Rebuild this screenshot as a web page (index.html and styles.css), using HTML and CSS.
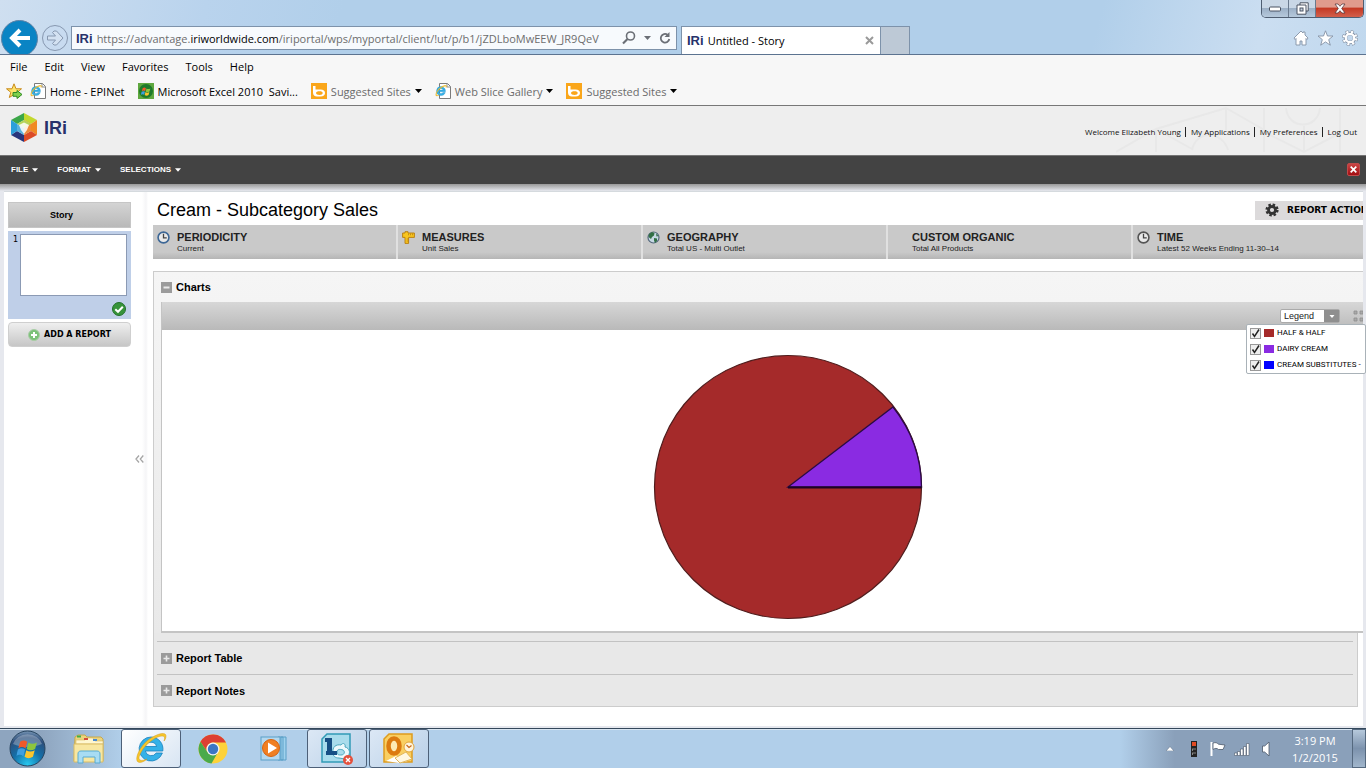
FILE: index.html
```html
<!DOCTYPE html>
<html lang="en">
<head>
<meta charset="utf-8">
<title>Untitled - Story</title>
<link rel="stylesheet" href="styles.css">
</head>
<body>
<svg class="defs" aria-hidden="true">
  <defs>
    <symbol id="ie" viewBox="0 0 32 32">
      <path d="M16 4a12 12 0 1 0 11.400 16h-6.200a6 6 0 0 1-10.900-2h17.500A12 12 0 0 0 16 4zm-5.600 9.500a5.800 5.800 0 0 1 11.200 0z" fill="#35b1e8" stroke="#1680bd" stroke-width=".8"/>
      <path d="M3 29C-1 26 5 12 16 5 24 0 31-1 31 3c0 2-1 4-2 5 1-3 1-5-2-5-5 0-14 6-19 13-4 6-5 10-3 11 2 1 5 0 7-1-3 3-7 4-9 3z" fill="#f6c62c" stroke="#d69a12" stroke-width=".5"/>
    </symbol>
    <symbol id="iepage" viewBox="0 0 16 16">
      <path d="M4.500.500h8l3 3v12h-11z" fill="#fff" stroke="#7b7b7b"/>
      <path d="M12 .5v3.500h3.500" fill="none" stroke="#8b8b8b"/>
      <use href="#ie" x="0" y="2" width="12" height="12"/>
    </symbol>
    <symbol id="bing" viewBox="0 0 16 16">
      <rect width="16" height="16" fill="#faa61a"/>
      <path fill-rule="evenodd" d="M2 3h2.500v3.500h5c3 0 4.500 1.500 4.500 3.500s-1.500 3.500-4.500 3.500H6c-2.500 0-4-1.500-4-4zm6.500 5.200c-2 0-3.500.6-3.500 1.800S6.500 12 8.500 12s3.200-.8 3.200-2-1.200-1.800-3.200-1.800z" fill="#fff"/>
    </symbol>
    <symbol id="down" viewBox="0 0 7 4"><path d="M0 0h7L3.500 4z" fill="currentColor"/></symbol>
    <symbol id="flag" viewBox="0 0 20 20">
      <path d="M3 4c2-1.500 4-1.500 6 0L7.500 9.500c-2-1.500-4-1.500-6 0z" fill="#f0592a"/>
      <path d="M10 4.500c2 1.500 4.500 1.500 7 0L15.500 10c-2.500 1.500-5 1.500-7 0z" fill="#8cc63e"/>
      <path d="M1.200 10.500c2-1.500 4-1.500 6 0L5.700 16c-2-1.500-4-1.500-6 0z" fill="#3f9fe0"/>
      <path d="M8.200 11c2 1.500 4.500 1.500 7 0l-1.500 5.500c-2.500 1.500-5 1.500-7 0z" fill="#fbc52d"/>
    </symbol>
    <symbol id="clock" viewBox="0 0 12 12">
      <circle cx="6" cy="6" r="5" fill="#e9e9e9" stroke="currentColor" stroke-width="1.500"/>
      <path d="M6 2.500V6.300h3" fill="none" stroke="#444" stroke-width="1.200"/>
    </symbol>
  </defs>
</svg>

<header class="browser">
  <div class="nav">
    <div class="history">
      <button class="back" aria-label="Back"><svg viewBox="0 0 22 20" width="22" height="20"><path d="M11 2L3 10l8 8M3.500 10H21" fill="none" stroke="#fff" stroke-width="4"/></svg></button>
      <button class="forward" aria-label="Forward"><svg viewBox="0 0 18 16" width="18" height="16"><path d="M1.500 6h8L6.500 2.500 8 1h2.500L17 8l-6.500 7H8l-1.500-1.500 3-3.500h-8z" fill="#d3e1f1" stroke="#8798b0"/></svg></button>
    </div>
    <div class="address">
      <span class="iri small">IRi</span>
      <div class="url" role="textbox" contenteditable="true" spellcheck="false" aria-label="Address">https://advantage.<b>iriworldwide.com</b>/iriportal/wps/myportal/client/!ut/p/b1/jZDLboMwEEW_JR9QeV</div>
      <button class="plain" aria-label="Search"><svg width="14" height="14" viewBox="0 0 14 14"><circle cx="8.500" cy="5" r="4" fill="none" stroke="#6b6f76" stroke-width="1.600"/><path d="M5.500 8L1 12.500" stroke="#6b6f76" stroke-width="2.200"/></svg></button>
      <button class="plain grey" aria-label="Address history"><svg width="7" height="4"><use href="#down"/></svg></button>
      <button class="plain" aria-label="Refresh"><svg width="12" height="14" viewBox="0 0 12 14"><path d="M8.500 3.700A4.300 4.300 0 1 0 10.300 8" fill="none" stroke="#6b6f76" stroke-width="1.800"/><path d="M10.500 1v5h-5z" fill="#6b6f76"/></svg></button>
    </div>
    <div class="tabs">
      <div class="tab"><span class="iri small">IRi</span><span class="tab-name">Untitled - Story</span>
        <button class="plain" aria-label="Close tab"><svg width="9" height="9" viewBox="0 0 9 9"><path d="M1 1l7 7M8 1L1 8" stroke="#9a9a9a" stroke-width="2"/></svg></button></div>
      <button class="newtab" aria-label="New tab"></button>
    </div>
    <div class="window">
      <div class="controls">
        <button aria-label="Minimize"><svg width="13" height="6" viewBox="0 0 13 6"><rect x=".5" y="1" width="11" height="4" rx="1" fill="#fff" stroke="#4a5362"/></svg></button>
        <button aria-label="Restore"><svg width="13" height="13" viewBox="0 0 13 13"><path d="M4 .8h8.200V9H10v3.200H1V3h3z" fill="#fff" stroke="#4a5362"/><rect x="4" y="6" width="3" height="3" fill="#c8d2df" stroke="#4a5362"/><path d="M4 3h6v6" fill="none" stroke="#4a5362"/></svg></button>
        <button class="close" aria-label="Close"><svg width="12" height="11" viewBox="0 0 12 11"><path d="M1 1h3l2 2.300L8 1h3L7.700 5.500 11 10H8L6 7.700 4 10H1l3.300-4.500z" fill="#fff" stroke="#5b3a3f" stroke-width=".8"/></svg></button>
      </div>
      <div class="tools">
        <button class="plain" aria-label="Home"><svg width="16" height="16" viewBox="0 0 16 16"><path d="M8 1L1 8l1 1.500 1-1V15h4v-4h2v4h4V8.500l1 1L15 8l-3-3V2h-2v1z" fill="#fff" stroke="#8592a5" stroke-width=".9"/></svg></button>
        <button class="plain" aria-label="Favorites"><svg width="17" height="16" viewBox="0 0 17 16"><path d="M8.500.8l2 5.200H16l-4.300 3.600 1.600 5.600-4.800-3.300-4.800 3.300 1.600-5.600L1 6h5.500z" fill="#fff" stroke="#8592a5" stroke-width=".9"/></svg></button>
        <button class="plain" aria-label="Settings"><svg width="16" height="16" viewBox="0 0 16 16"><circle cx="8" cy="8" r="6" fill="none" stroke="#8592a5" stroke-width="4" stroke-dasharray="2.700 2.010"/><circle cx="8" cy="8" r="4.500" fill="#c4d9ee" stroke="#8592a5" stroke-width="3.400"/><circle cx="8" cy="8" r="6" fill="none" stroke="#fff" stroke-width="2.800" stroke-dasharray="2 2.710" stroke-dashoffset="-.35"/><circle cx="8" cy="8" r="4.200" fill="none" stroke="#fff" stroke-width="2.200"/></svg></button>
      </div>
    </div>
  </div>
  <nav class="menu" aria-label="Browser menu">
    <button>File</button><button>Edit</button><button>View</button><button>Favorites</button><button>Tools</button><button>Help</button>
  </nav>
  <nav class="bookmarks" aria-label="Favorites bar">
    <button class="plain star" aria-label="Add to Favorites bar"><svg width="17" height="16" viewBox="0 0 17 16"><path d="M8 .8l2 5h5.500l-4.300 3.500 1.500 5.200L8 11.500l-4.700 3 1.500-5.200L.5 5.800H6z" fill="#fde36a" stroke="#c98a1b"/><path d="M7 9.500h4V7.500l5 4-5 4v-2.200H7z" fill="#7fd04c" stroke="#2f8a25"/></svg></button>
    <a href="#" class="dark"><svg width="16" height="16"><use href="#iepage"/></svg>Home - EPINet</a>
    <a href="#" class="dark"><svg width="16" height="16" viewBox="0 0 16 16"><rect width="16" height="16" fill="#5fa83f"/><circle cx="8" cy="8" r="7" fill="#1e7a2a"/><use href="#flag" x="3" y="3" width="11" height="11"/></svg>Microsoft Excel 2010&nbsp; Savi...</a>
    <a href="#"><svg width="16" height="16"><use href="#bing"/></svg>Suggested Sites<svg class="arrow" width="7" height="4"><use href="#down"/></svg></a>
    <a href="#"><svg width="16" height="16"><use href="#iepage"/></svg>Web Slice Gallery<svg class="arrow" width="7" height="4"><use href="#down"/></svg></a>
    <a href="#"><svg width="16" height="16"><use href="#bing"/></svg>Suggested Sites<svg class="arrow" width="7" height="4"><use href="#down"/></svg></a>
  </nav>
</header>

<header class="portal">
  <svg class="pattern" width="240" height="48" viewBox="0 0 240 48" fill="none" stroke="#e8e8e8" stroke-width="2" aria-hidden="true"><path d="M0 46L40 23 110 2l42 24M40 23v23M110 2v22M40 23l36 20M76 44c4-20 30-20 36 0M148 2v44M148 26l40 20 38-20M188 28v18M170 2c2 22 32 22 34 0M188 20v10M224 2v44"/></svg>
  <div class="brand">
    <svg width="26" height="29" viewBox="0 0 26 29"><path d="M13 0L0 7l6 4 7-4z" fill="#3ba648"/><path d="M13 0l13 7-6 4-7-4z" fill="#c3d82e"/><path d="M26 7v15l-6-4v-7z" fill="#f08a24"/><path d="M26 22l-13 7v-7l7-4z" fill="#dc4b27"/><path d="M13 29L0 22l6-4 7 4z" fill="#28357c"/><path d="M0 22V7l6 4v7z" fill="#2b9fda"/><path d="M13 7l7 4v7l-7 4z" fill="#ee8a3a"/><path d="M6 11l7-4 7 4-7 4z" fill="#b5d45a"/><path d="M6 11l7 4v7l-7-4z" fill="#58b0dd"/><path d="M8 12l5-2.500 5 2.500-2 5-3 4-3-4z" fill="#fff" opacity=".85"/></svg>
    <span class="iri large">IRi</span>
  </div>
  <nav class="account" aria-label="Account">
    <span>Welcome Elizabeth Young</span><a href="#">My Applications</a><a href="#">My Preferences</a><a href="#">Log Out</a>
  </nav>
</header>

<nav class="commands" aria-label="Report menu">
  <button>FILE<svg width="6" height="4"><use href="#down"/></svg></button>
  <button>FORMAT<svg width="6" height="4"><use href="#down"/></svg></button>
  <button>SELECTIONS<svg width="6" height="4"><use href="#down"/></svg></button>
  <button class="exit" aria-label="Close report"><svg width="7" height="7" viewBox="0 0 7 7"><path d="M.7.7l5.600 5.600M6.300.7L.7 6.300" stroke="#fff" stroke-width="1.700"/></svg></button>
</nav>

<div class="workspace">
  <aside class="sidebar">
    <div class="story">
      <h2 class="story-head">Story</h2>
      <div class="page-card">
        <span>1</span>
        <div class="thumb"></div>
        <svg class="ok" width="14" height="14" viewBox="0 0 14 14"><circle cx="7" cy="7" r="6.500" fill="#37933a" stroke="#23702b"/><path d="M3.300 7.200l2.700 2.600 4.800-5" fill="none" stroke="#fff" stroke-width="2"/></svg>
      </div>
      <button class="add"><svg width="12" height="12" viewBox="0 0 12 12"><circle cx="6" cy="6" r="5.500" fill="#7cc178" stroke="#a9cda6"/><path d="M6 3v6M3 6h6" stroke="#fff" stroke-width="2"/></svg>ADD A REPORT</button>
    </div>
    <button class="collapse" aria-label="Collapse sidebar"><svg width="9" height="8" viewBox="0 0 9 8"><path d="M4 .5L1 4l3 3.500M8.300.5L5.300 4l3 3.500" fill="none" stroke="#a5a5a5" stroke-width="1.300"/></svg></button>
  </aside>

  <main class="report">
    <div class="title-row">
      <h1>Cream - Subcategory Sales</h1>
      <button class="actions"><svg width="14" height="14" viewBox="0 0 14 14"><circle cx="7" cy="7" r="5.300" fill="none" stroke="#333" stroke-width="2.600" stroke-dasharray="2.400 1.760"/><circle cx="7" cy="7" r="3.500" fill="none" stroke="#333" stroke-width="2.800"/></svg>REPORT ACTION</button>
    </div>
    <div class="dimensions">
      <section><svg class="blue" width="13" height="13"><use href="#clock"/></svg><div><h2>PERIODICITY</h2><p>Current</p></div></section>
      <section><svg width="13" height="13" viewBox="0 0 13 13"><path d="M.6 2h2.400V.7h3V2h6.400v4.400H6.600v6H3V6.400H.6z" fill="#f8c51f" stroke="#b67a0c" stroke-width=".9"/><path d="M6.500 2.500v1.800M8.500 2.500v1.800M10.500 2.500v1.800M4.700 8h1.500M4.700 10h1.500" stroke="#b67a0c" stroke-width=".7"/></svg><div><h2>MEASURES</h2><p>Unit Sales</p></div></section>
      <section><svg width="13" height="13" viewBox="0 0 13 13"><circle cx="6.500" cy="6.500" r="5.500" fill="#c6d8e4" stroke="#55697d" stroke-width="1.200"/><path d="M2 3l3-2 2.500 1L7 4.500 5 6 4 8 1.500 6zM7 7l3 .5V10l-2 2-1-2.500zM9 2.500l2.500 2.500-2 .5z" fill="#337046"/></svg><div><h2>GEOGRAPHY</h2><p>Total US - Multi Outlet</p></div></section>
      <section><span class="noicon"></span><div><h2>CUSTOM ORGANIC</h2><p>Total All Products</p></div></section>
      <section><svg class="gray" width="13" height="13"><use href="#clock"/></svg><div><h2>TIME</h2><p>Latest 52 Weeks Ending 11-30–14</p></div></section>
    </div>

    <section class="charts">
      <h2 class="fold"><button class="toggle" aria-label="Collapse charts"><svg width="11" height="11" viewBox="0 0 11 11"><path d="M2.500 5.500h6" stroke="#e9e9e9" stroke-width="2"/></svg></button>Charts</h2>
      <div class="chart-box">
        <div class="chart-bar">
          <button class="legend" aria-haspopup="true" aria-expanded="true"><span>Legend</span><i><svg width="6" height="3" viewBox="0 0 7 4"><use href="#down"/></svg></i></button>
          <button class="expand" aria-label="Expand"><svg width="10" height="12" viewBox="0 0 10 12"><path d="M1 4V1h3v3zM1 8v3h3V8zM7 1h3v3H7zM7 8h3v3H7z" fill="#aaa" stroke="#8e8e8e" stroke-width=".8"/></svg></button>
          <div class="legend-list">
            <label><input type="checkbox" checked><i class="half"></i>HALF &amp; HALF</label>
            <label><input type="checkbox" checked><i class="dairy"></i>DAIRY CREAM</label>
            <label><input type="checkbox" checked><i class="subs"></i>CREAM SUBSTITUTES -</label>
          </div>
        </div>
        <div class="canvas">
          <svg width="270" height="266" viewBox="0 0 270 266" role="img" aria-label="Half and half and dairy cream sales">
            <ellipse cx="135" cy="133" rx="133.500" ry="131.500" fill="#a52a2a" stroke="#501d1d" stroke-width="1.200"/>
            <path d="M135 133L240 53A133.500 131.500 0 0 1 268.500 133z" fill="#8a2be2" stroke="#2b0b45" stroke-width="1.300"/>
            <path d="M135 133.500H268.500" stroke="#1d0425" stroke-width="2"/>
          </svg>
        </div>
      </div>
    </section>
    <div class="extras">
      <h2 class="fold"><button class="toggle" aria-label="Expand report table"><svg width="11" height="11" viewBox="0 0 11 11"><path d="M2.500 5.500h6M5.500 2.500v6" stroke="#e9e9e9" stroke-width="1.600"/></svg></button>Report Table</h2>
      <h2 class="fold"><button class="toggle" aria-label="Expand report notes"><svg width="11" height="11" viewBox="0 0 11 11"><path d="M2.500 5.500h6M5.500 2.500v6" stroke="#e9e9e9" stroke-width="1.600"/></svg></button>Report Notes</h2>
    </div>
  </main>
</div>

<footer class="taskbar">
  <button class="start" aria-label="Start"><svg width="37" height="37" viewBox="0 0 37 37"><defs><radialGradient id="orb" cx=".5" cy=".95" r=".95"><stop offset="0" stop-color="#27c7ee"/><stop offset=".45" stop-color="#146fa8"/><stop offset=".8" stop-color="#2d4f7c"/><stop offset="1" stop-color="#7896b5"/></radialGradient></defs><circle cx="18.500" cy="18.500" r="17.500" fill="url(#orb)" stroke="#27445f"/><path d="M4 14a15 13 0 0 1 29 0c-9 4-20 4-29 0z" fill="#fff" opacity=".28"/><use href="#flag" x="7.500" y="7" width="24" height="24"/></svg></button>
  <button class="task" aria-label="Explorer"><svg width="34" height="30" viewBox="0 0 34 30"><path d="M3 3l3-2h7l2 2h14l2 2v22H2z" fill="#ecd47d" stroke="#c6a84c"/><path d="M4 6h9l1-2h7l2 3h8v3H4z" fill="#fff7d0" stroke="#d9bb62" stroke-width=".6"/><rect x="5" y="1.500" width="4" height="2" fill="#40ad48"/><rect x="12" y="4" width="4" height="2" fill="#d44b3b"/><rect x="21" y="5" width="4" height="2" fill="#4b8ad0"/><path d="M2 10h29v18H2z" fill="#f8e7a1" stroke="#d9bc65"/><path d="M6 29v-9c0-2 1-3 3-3h16c2 0 3 1 3 3v9h-5v-6H11v6z" fill="#a8dcf3" stroke="#58abd2"/></svg></button>
  <button class="task open current" aria-label="Internet Explorer"><svg width="32" height="32"><use href="#ie"/></svg></button>
  <button class="task" aria-label="Chrome"><svg width="30" height="30" viewBox="0 0 30 30"><circle cx="15" cy="15" r="14.500" fill="#fdd23a"/><path d="M2.500 7.700A14.500 14.500 0 0 1 28 8.500H15a6.500 6.500 0 0 0-6 9z" fill="#dd4033"/><path d="M2.500 7.700A14.500 14.500 0 0 0 13.500 29.400l6-10.500a6.500 6.500 0 0 1-10.300-1.200z" fill="#4aaa4a"/><circle cx="15" cy="15" r="6.500" fill="#f4f4f4"/><circle cx="15" cy="15" r="5.200" fill="#3b76c4"/></svg></button>
  <button class="task" aria-label="Media Player"><svg width="30" height="26" viewBox="0 0 30 26"><path d="M21 1h5v23h-5zM18 1h5v23h-5z" fill="#9fd2ee" stroke="#5b9fc7"/><rect x="1" y="1" width="19" height="23" fill="#b4d8ef" stroke="#5b9fc7"/><circle cx="11" cy="12" r="8.500" fill="#f07f22" stroke="#d7630f"/><path d="M8 6.500l9 5.500-9 5.500z" fill="#fff"/></svg></button>
  <button class="task open" aria-label="Lync"><svg width="32" height="32" viewBox="0 0 32 32"><path d="M1 6l5-5h23v28H1z" fill="#a9dcec" stroke="#329bb6" stroke-width="1.500"/><path d="M12 20c-1-6 3-9 8-8 2-3 5-1 4 2 5 1 6 7 2 10l-2 2-6-1c-4 0-6-2-6-5zm4-1c0 3 2 3 4 3 4 0 4-4 2-5-3-1-6-1-6 2z" fill="#eef9fc" fill-rule="evenodd" stroke="#4aa7be"/><path d="M4 5h7v13h5v4H5v-4h1V9H4z" fill="#174f84"/><circle cx="27" cy="27" r="5" fill="#e4513d"/><path d="M25 25l4 4M29 25l-4 4" stroke="#fff" stroke-width="1.400"/></svg></button>
  <button class="task open" aria-label="Outlook"><svg width="32" height="32" viewBox="0 0 32 32"><path d="M1 6l5-5h23v28H1z" fill="#f9cf62" stroke="#de9c1e" stroke-width="1.500"/><path d="M3 28l10-5 12 5-9 2z" fill="#fff"/><path d="M12 25l11-6 6 7-12 4z" fill="#fff7df" stroke="#e1b65a"/><ellipse cx="11" cy="13" rx="5.500" ry="7.500" fill="#fdeab5" stroke="#dc7b10" stroke-width="4.500"/><circle cx="26" cy="14" r="5" fill="#fff5dc" stroke="#e0a33a"/><path d="M23.500 12l2.500 2.500 2.500-2" fill="none" stroke="#c8661a" stroke-width="1.200"/></svg></button>
  <div class="tray">
    <button class="status" aria-label="Show hidden icons"><svg width="8" height="5" viewBox="0 0 8 5"><path d="M0 5l4-4.500L8 5z" fill="#fff" stroke="#56687e" stroke-width=".5"/></svg></button>
    <button class="status" aria-label="Status"><svg width="6" height="16" viewBox="0 0 6 16"><rect width="6" height="16" fill="#222"/><rect x="1" y="1" width="4" height="4" fill="#e04a23"/><path d="M1 8h4M1.500 8v2M1 12h4M1.500 12v2" stroke="#999" stroke-width=".8"/></svg></button>
    <button class="status" aria-label="Action center"><svg width="16" height="16" viewBox="0 0 16 16"><path d="M1.500 1v14" stroke="#fff" stroke-width="2"/><path d="M3 2c3-1 4 0 5.500 1.200L15 4l-2 4.500H8.500C7 7 5 7 3 8.500z" fill="#fff" stroke="#4b5869" stroke-width=".8"/></svg></button>
    <button class="status" aria-label="Network"><svg width="16" height="14" viewBox="0 0 16 14"><path d="M.5 11h2.500v2.500H.5zM3.500 9.500H6v4H3.500zM6.500 7H9v6.500H6.500zM9.500 4.500H12v9H9.500zM12.500 1.500H15v12h-2.500z" fill="#fff" stroke="#4b5869" stroke-width=".6"/></svg></button>
    <button class="status" aria-label="Volume"><svg width="8" height="16" viewBox="0 0 8 16"><path d="M.5 5h2.200L7 1v14l-4.300-4H.5z" fill="#fff" stroke="#4b5869" stroke-width=".8"/></svg></button>
    <div class="time"><span>3:19 PM</span><span>1/2/2015</span></div>
    <button class="desktop" aria-label="Show desktop"></button>
  </div>
</footer>
</body>
</html>
```

FILE: styles.css
```css
* { box-sizing: border-box; }
body {
  margin: 0;
  min-height: 100vh;
  display: flex;
  flex-direction: column;
  overflow-x: hidden;
  background: #fff;
  color: #000;
  font-family: "Liberation Sans", Arial, sans-serif;
  font-size: 11px;
}
button {
  margin: 0;
  padding: 0;
  border: 0;
  background: none;
  color: inherit;
  font: inherit;
  display: flex;
  align-items: center;
  justify-content: center;
  white-space: nowrap;
}
a { color: inherit; text-decoration: none; }
h1, h2, p { margin: 0; }
svg { display: block; flex: none; }
.defs { position: absolute; width: 0; height: 0; }

/* Browser frame */
.browser { font-family: "Open Sans", "Noto Sans", sans-serif; font-size: 11px; background: #f7f7f7; border-bottom: 1px solid #777; }
.nav {
  display: flex;
  align-items: flex-end;
  height: 55px;
  border-bottom: 1px solid #5c7390;
  background: linear-gradient(105deg, #cfdff0 0, #b9d3ed 15%, #b1cfea 25%, #b1cfea 80%, #cbdef1 92%, #c0d8ee 100%);
  overflow: hidden;
}
.history { display: flex; align-items: center; height: 32px; width: 71px; flex: none; gap: 4px; padding-left: 1px; }
.back { width: 37px; height: 37px; flex: none; border-radius: 50%; background: #0a84c4; border: 1px solid #5f83a6; }
.forward { width: 26px; height: 26px; flex: none; border-radius: 50%; border: 1px solid #8798b0; background: #c8dbf0; }
.address {
  display: flex;
  align-items: center;
  gap: 8px;
  flex: 606 1 606px;
  min-width: 0;
  height: 24px;
  margin: 0 4px 4px 0;
  padding: 0 5px 0 4px;
  border: 1px solid #7d92aa;
  background: #f7fafd;
}
.url { flex: 1; min-width: 0; overflow: hidden; white-space: nowrap; color: #6d6d6d; margin-left: -4px; }
.url b { font-weight: 400; color: #000; }
.iri { color: #27316b; font-family: "Liberation Sans", Arial, sans-serif; font-weight: 700; line-height: 1; }
.small { font-size: 13px; }
.large { font-size: 18px; }
.grey { color: #6b6f76; }
.tabs { display: flex; align-items: flex-end; flex: 229 1 229px; }
.tab { display: flex; align-items: center; gap: 4px; flex: 200 1 200px; height: 28px; padding: 0 6px 0 5px; border: 1px solid #7d92aa; border-bottom: 0; background: #fff; }
.tab-name { flex: 1; }
.newtab { flex: 29 1 29px; height: 28px; border: 1px solid #7d92aa; border-left: 0; border-bottom: 0; background: #bdc9d6; }
.window { flex: 456 1 456px; align-self: stretch; display: flex; flex-direction: column; align-items: flex-end; justify-content: space-between; }
.controls { display: flex; height: 18px; margin-right: 2px; border: 1px solid #4f5e72; border-top: 0; border-radius: 0 0 5px 5px; overflow: hidden; }
.controls button { width: 27px; background: linear-gradient(#c9d7e6 45%, #9cb0c6 50%, #b6c9dc); border-right: 1px solid #6a7a8e; }
.controls .close { width: 47px; border: 0; background: linear-gradient(#e09b8d 40%, #c53a25 50%, #d2604c); }
.tools { display: flex; gap: 8px; padding: 0 8px 8px 0; }
.menu { display: flex; align-items: center; gap: 17px; height: 22px; padding-left: 10px; }
.bookmarks { display: flex; align-items: center; height: 28px; padding-left: 6px; color: #6b6b6b; }
.bookmarks a { display: flex; align-items: center; gap: 4px; margin-right: 13px; white-space: nowrap; }
.star { margin-right: 7px; }
.dark, .arrow { color: #000; }

/* Portal header */
.portal { position: relative; display: flex; justify-content: space-between; align-items: center; height: 49px; padding: 0 9px 0 11px; background: #eee; }
.pattern { position: absolute; right: 10px; top: 0; }
.brand { display: flex; align-items: center; gap: 7px; padding-bottom: 6px; }
.account { position: relative; display: flex; font: 8px/10px "Open Sans", sans-serif; color: #111; padding-top: 3px; }
.account a { margin-left: 4px; padding-left: 5px; border-left: 1px solid #222; }
.commands {
  display: flex;
  align-items: center;
  gap: 19px;
  height: 29px;
  padding: 0 6px 1px 11px;
  border-top: 1px solid #747474;
  background: #434343;
  color: #fff;
  font-size: 8px;
  font-weight: 700;
}
.commands button { gap: 4px; }
.commands .exit { width: 13px; height: 13px; margin-left: auto; border-radius: 2px; border: 1px solid #c04a4a; background: linear-gradient(#c94444, #a30e12); }

/* Workspace */
.workspace {
  flex: 1;
  display: flex;
  padding: 7px 3px 2px 4px;
  background: linear-gradient(#999, #e6e8ee 7px);
}
.sidebar { display: flex; flex: none; width: 144px; background: linear-gradient(90deg, #fff 138px, #f5f5f7 142px, #fff); border-top: 1px solid #d5dade; }
.story { width: 127px; padding: 10px 0 0 4px; }
.story-head { height: 26px; padding-right: 16px; border: 1px solid #c6c6c6; background: linear-gradient(#d4d4d4, #b9b9b9); font: bold 9px/24px "Liberation Sans", sans-serif; text-align: center; }
.page-card { display: flex; flex-wrap: wrap; justify-content: space-between; height: 88px; margin: 3px 0; padding: 3px 4px; background: #bfcfe8; font: 8px/12px "DejaVu Sans", sans-serif; }
.page-card span { padding-left: 1px; }
.thumb { width: 107px; height: 62px; border: 1px solid #8b9ab4; background: #fff; }
.ok { margin: 5px 1px 0 auto; }
.add { width: 100%; height: 25px; gap: 4px; border: 1px solid #cfcfcf; border-radius: 4px; background: linear-gradient(#efefef, #c6c6c6); font: bold 8px "DejaVu Sans", sans-serif; }
.collapse { margin-left: 4px; }

.report { flex: 1; min-width: 0; padding-left: 5px; background: #fff; border-top: 1px solid #d5dade; }
.title-row { display: flex; justify-content: space-between; align-items: center; height: 33px; padding-top: 3px; }
.title-row h1 { padding-left: 4px; font-size: 18px; font-weight: 400; }
.actions { width: 108px; height: 19px; overflow: hidden; justify-content: flex-start; gap: 8px; padding-left: 10px; background: #dcdadb; font: bold 9px "DejaVu Sans", sans-serif; }
.dimensions { display: grid; grid-template-columns: 245fr 245fr 245fr 245fr 230fr; height: 34px; background: linear-gradient(#c9c9c9 80%, #b5b5b5); }
.dimensions section { display: flex; gap: 7px; padding: 6px 0 0 4px; border-right: 2px solid #e0e0e0; }
.dimensions section:last-child { border: 0; }
.dimensions h2 { font-size: 11px; line-height: 12px; color: #222; }
.dimensions p { font-size: 8px; line-height: 11px; color: #222; }
.blue { color: #3d6796; }
.gray { color: #555; }
.noicon { width: 13px; }

.charts { margin-top: 12px; border: 1px solid #ccc; border-width: 1px 0 0 1px; padding-left: 7px; background: linear-gradient(#f5f5f5, #e9e9e9); }
.fold { display: flex; align-items: center; gap: 4px; height: 30px; font-size: 11px; }
.toggle { width: 11px; height: 11px; background: #9b9b9b; }
.chart-box { border: 1px solid #c4c4c4; border-width: 0 0 2px 1px; background: #fff; }
.chart-bar { position: relative; display: flex; justify-content: flex-end; gap: 13px; height: 28px; padding-top: 7px; background: linear-gradient(#d7d7d7, #b9b9b9); }
.legend { width: 60px; height: 14px; border: 1px solid #aaa; border-radius: 2px; background: #fff; font-size: 9px; color: #222; }
.legend span { flex: 1; text-align: left; padding-left: 3px; }
.legend i { display: flex; align-items: center; justify-content: center; width: 15px; height: 12px; background: #8f8f8f; color: #fff; }
.expand { height: 14px; }
.legend-list {
  position: absolute;
  top: 22px;
  right: -3px;
  width: 120px;
  height: 50px;
  padding: 0 2px 0 3px;
  overflow: hidden;
  border: 1px solid #a9b2b8;
  border-radius: 2px;
  background: #fff;
  font: 8px/16px Roboto, sans-serif;
}
.legend-list label { display: flex; align-items: center; gap: 3px; height: 16px; white-space: nowrap; }
.legend-list input {
  appearance: none;
  flex: none;
  width: 11px;
  height: 11px;
  margin: 0;
  border: 1px solid #999;
  background: #eee;
}
.legend-list input:checked { background: #eee url("data:image/svg+xml,%3Csvg xmlns='http://www.w3.org/2000/svg' viewBox='0 0 9 9'%3E%3Cpath d='M1.500 4.500L3.500 7.500 8 .5' fill='none' stroke='%23222' stroke-width='1.500'/%3E%3C/svg%3E"); }
.legend-list i { flex: none; width: 10px; height: 8px; }
.half { background: #a52a2a; }
.dairy { background: #8a2be2; }
.subs { background: #00f; }
.canvas { display: flex; justify-content: center; padding: 24px 0 11px 51px; }
.extras { margin-right: 5px; padding: 8px 4px 0 3px; border: 1px solid #ccc; border-top: 0; background: #e8e8e8; }
.extras .fold { height: 33px; padding-left: 4px; border-top: 1px solid #c2c2c2; }
.extras .fold:last-child { height: 32px; }

/* Taskbar */
.taskbar {
  display: flex;
  height: 40px;
  padding-left: 8px;
  border-top: 1px solid #33475a;
  box-shadow: inset 0 1px #d9e6f2;
  background: linear-gradient(90deg, #8ea5bf 0, #8ea5bf 3%, #b1cfea 9%, #b1cfea 82%, #8aa0ba 86%);
}
.start { width: 38px; }
.task { flex: none; width: 62px; }
.start + .task { margin-left: 12px; }
.open { border: 1px solid #4d6078; border-radius: 3px; background: linear-gradient(135deg, #dce8f5, #b9d0e8); width: 60px; margin: 0 1px; }
.current { background: linear-gradient(135deg, #fff, #d8e5f3); }
.tray { display: flex; align-items: center; margin-left: auto; }
.status { width: 24px; height: 24px; }
.time { display: flex; flex-direction: column; align-items: center; width: 50px; margin: 0 12px; color: #fff; font: 11px/17px "Open Sans", sans-serif; }
.desktop { align-self: stretch; width: 14px; border: 1px solid #55697f; background: linear-gradient(#b6c9dc, #7c92ad 50%, #a1b6cc); }
```
